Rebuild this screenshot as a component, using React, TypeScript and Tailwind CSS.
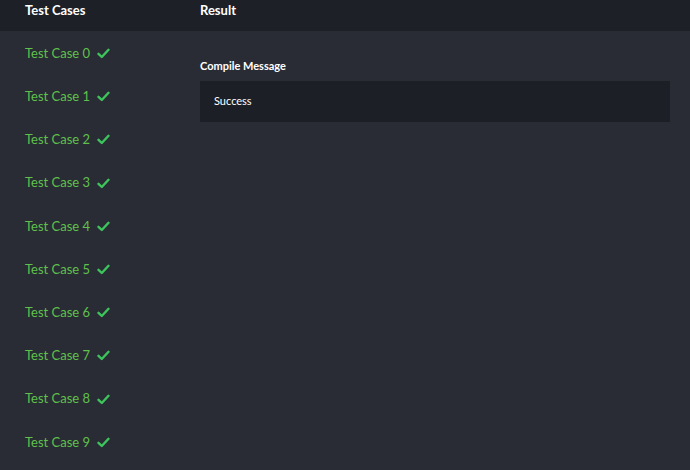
import React from "react";

const font = { fontFamily: "Lato, 'Open Sans', sans-serif" };

function CheckIcon() {
    return (
        <svg width="13" height="11" viewBox="0 0 13 11" fill="none">
            <path d="M1.5 5.8 L4.8 9 L11.5 1.8" stroke="#3dc45c" strokeWidth="2.4" strokeLinecap="round" strokeLinejoin="round"/>
        </svg>
    )
}

function TestCaseItem({index}: {index: number}) {
    return (
        <div className='h-[43.2px] flex items-center gap-[7px] pl-[25px] text-[13px] text-[#5fc14c]'>
            <span>Test Case {index}</span>
            <CheckIcon/>
        </div>
    )
}

export default function App() {
    const cases = [0, 1, 2, 3, 4, 5, 6, 7, 8, 9];

    return (
        <div className='w-[690px] h-[470px] bg-[#292c34] flex flex-col overflow-hidden' style={font}>
            <div className='h-[31px] shrink-0 bg-[#1e2028] flex items-center text-white font-bold text-[13px]'>
                <div className='w-[200px] pl-[25px] pb-[10px]'>Test Cases</div>
                <div className='pb-[10px]'>Result</div>
            </div>
            <div className='flex flex-1'>
                <div className='w-[200px] flex flex-col pt-[1px]'>
                    {cases.map(i => <TestCaseItem key={i} index={i}/>)}
                </div>
                <div className='flex-1 pr-[20px] pt-[27px]'>
                    <div className='text-white font-bold text-[11px] mb-[6px]'>Compile Message</div>
                    <div className='h-[41px] bg-[#1d1f26] flex items-center pl-[14px] text-white text-[11px]'>Success</div>
                </div>
            </div>
        </div>
    )
}
